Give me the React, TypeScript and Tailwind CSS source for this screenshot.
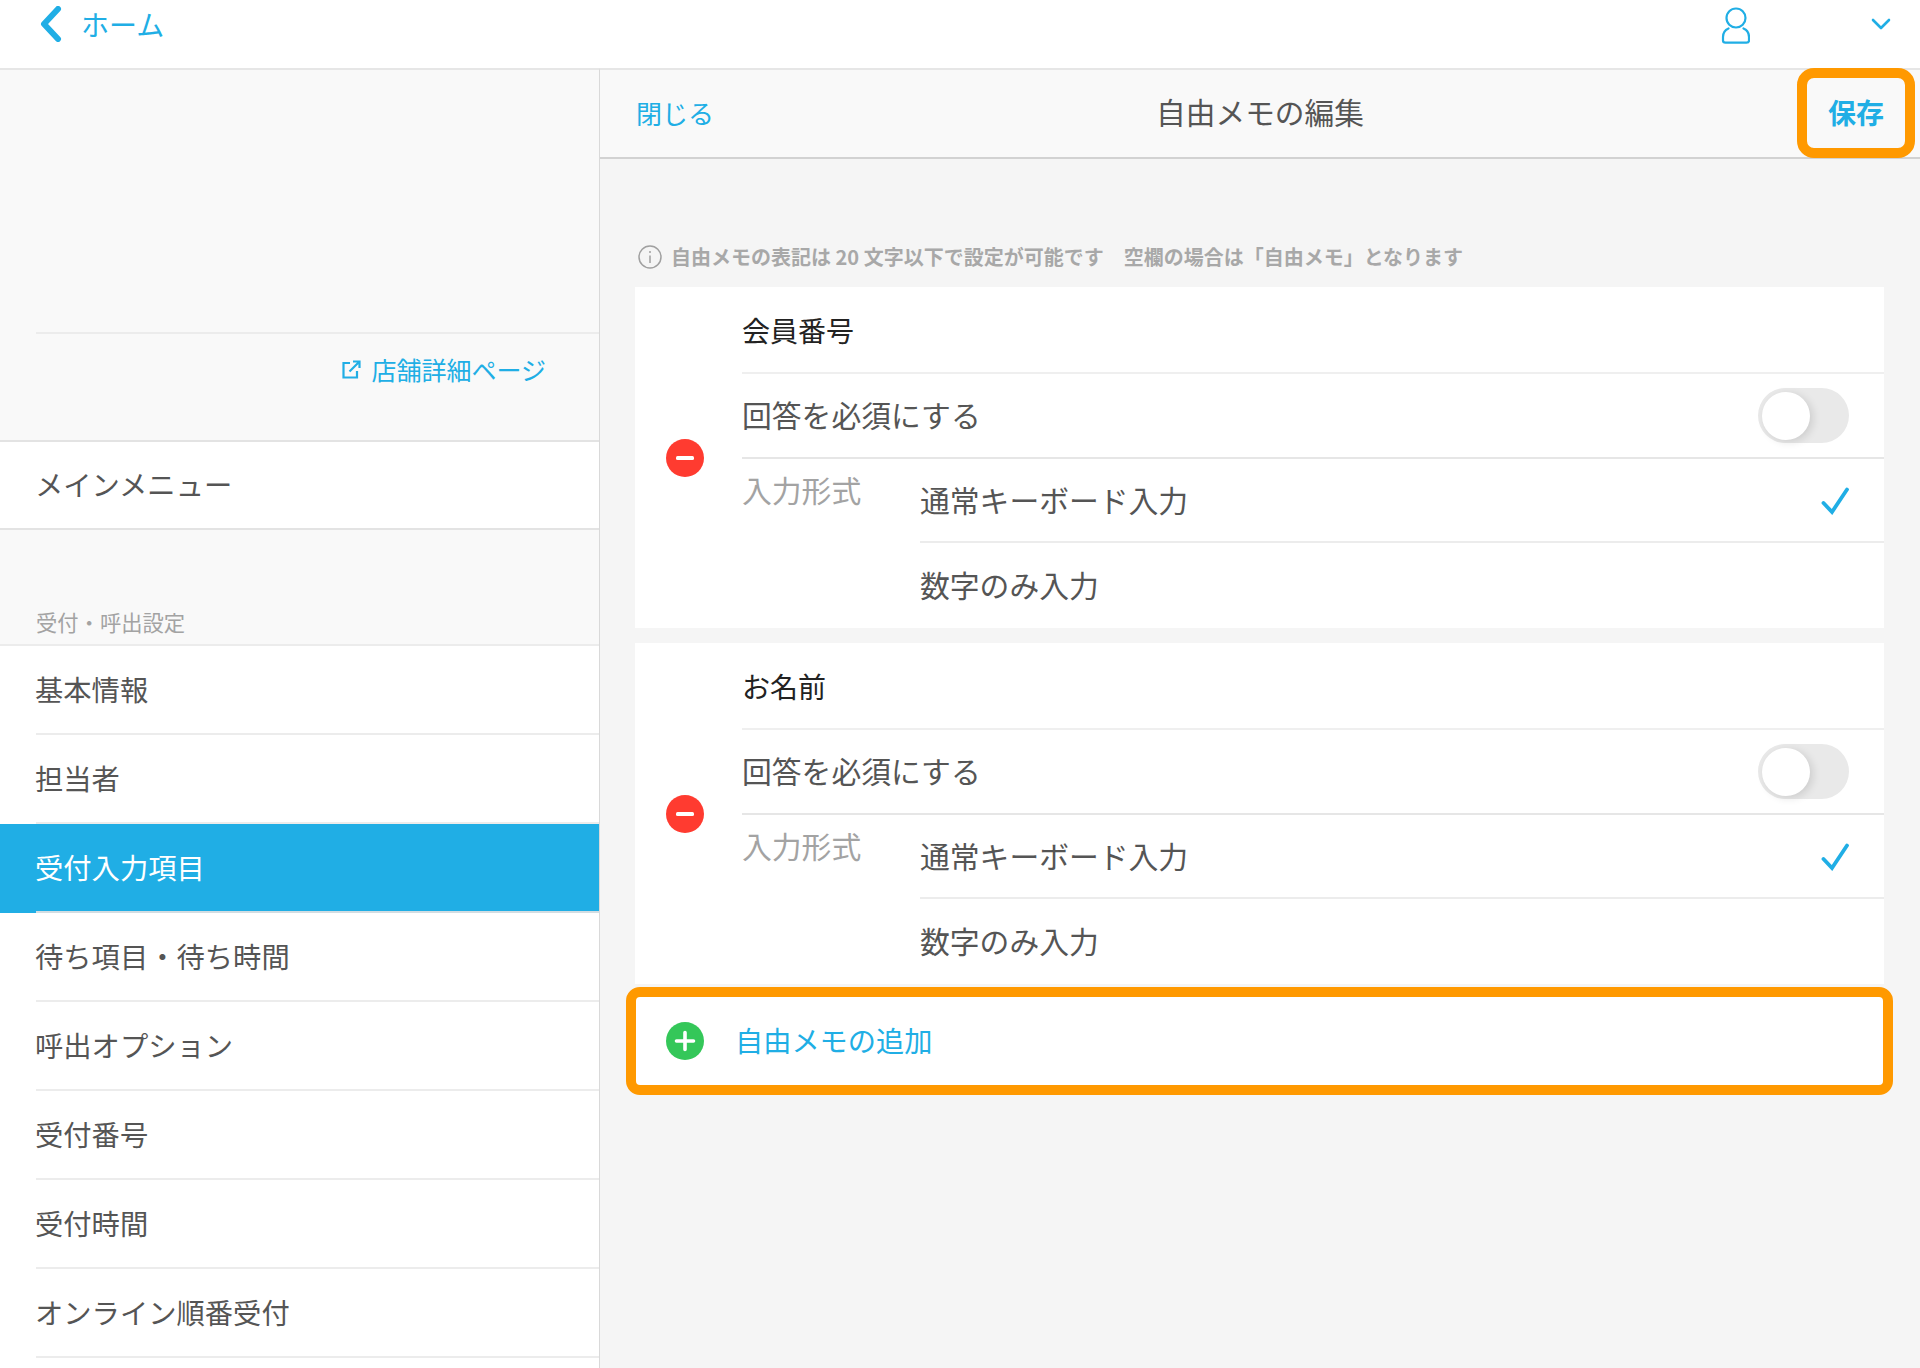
import React from "react";

function MinusIcon() {
  return (
    <svg width="38" height="38" viewBox="0 0 38 38">
      <circle cx="19" cy="19" r="19" fill="#ff3b30" />
      <rect x="10" y="17" width="18" height="4" rx="1.5" fill="#fff" />
    </svg>
  );
}

function Toggle() {
  return (
    <div className="flex h-[55px] w-[91px] items-center rounded-full bg-[#e9e9e9] pl-[4px]">
      <div className="h-[48px] w-[48px] rounded-full bg-white shadow-[3px_2px_8px_rgba(0,0,0,0.12)]" />
    </div>
  );
}

function Check() {
  return (
    <svg className="mt-[2px]" width="28" height="28" viewBox="0 0 28 28" fill="none">
      <path d="M2.5 16 L11 25 L26 2.5" stroke="#20aee5" strokeWidth="3.8" strokeLinecap="round" strokeLinejoin="miter" />
    </svg>
  );
}

function MemoCard({ title }: { title: string }) {
  return (
    <div className="flex h-[341px] items-center bg-white">
      <div className="flex w-[107px] shrink-0 pl-[31px]">
        <MinusIcon />
      </div>
      <div className="flex h-full flex-1 flex-col">
        <div className="flex h-[87px] items-center border-b-2 border-[#efefef] text-[28px] text-[#222]">{title}</div>
        <div className="flex h-[85px] items-center justify-between border-b-2 border-[#e6e6e6] pr-[35px] text-[29.8px] text-[#555]">
          <span className="mb-[3px]">回答を必須にする</span>
          <Toggle />
        </div>
        <div className="flex flex-1">
          <div className="w-[178px] shrink-0 pt-[5px] text-[29.8px] leading-[50px] text-[#a3a3a3]">入力形式</div>
          <div className="flex flex-1 flex-col text-[29.8px] text-[#555]">
            <div className="flex h-[84px] items-center justify-between border-b-2 border-[#ececec] pr-[35px]">
              <span className="mb-[2px]">通常キーボード入力</span>
              <Check />
            </div>
            <div className="flex flex-1 items-center pb-[2px]">数字のみ入力</div>
          </div>
        </div>
      </div>
    </div>
  );
}

function NavRow({ label, active }: { label: string; active?: boolean }) {
  return (
    <div className={active ? "h-[89px] shrink-0 bg-[#20aee5] pl-[36px]" : "h-[89px] shrink-0 bg-white pl-[36px]"}>
      <div
        className={
          active
            ? "flex h-full items-center border-b-2 border-[#d3dde2] text-[28.3px] text-white"
            : "flex h-full items-center border-b-2 border-[#ececec] text-[28.3px] text-[#555]"
        }
      >
        <span className="-ml-px">{label}</span>
      </div>
    </div>
  );
}

export default function App() {
  const nav = ["基本情報", "担当者", "受付入力項目", "待ち項目・待ち時間", "呼出オプション", "受付番号", "受付時間", "オンライン順番受付", ""];
  return (
    <div className="flex h-[1368px] w-[1920px] flex-col overflow-hidden bg-white font-['Noto_Sans_CJK_JP','Noto_Sans',sans-serif]">
      <header className="flex h-[68px] shrink-0 items-start bg-white">
        <div className="flex items-center pl-[39px] pt-[6px]">
          <svg width="24" height="36" viewBox="0 0 24 36" fill="none">
            <path d="M19 3 L5 18 L19 33" stroke="#20aee5" strokeWidth="6" strokeLinecap="round" strokeLinejoin="round" />
          </svg>
          <span className="ml-[18px] text-[28px] leading-[34px] text-[#20aee5]">ホーム</span>
        </div>
        <div className="ml-auto flex items-start pt-[7px]">
          <svg width="29" height="37" viewBox="0 0 29 37" fill="none" stroke="#20aee5" strokeWidth="2.2">
            <circle cx="15" cy="11" r="9.5" />
            <path d="M7.5 21.5 C4 23 2 26 2 30 V33.5 C2 35 3 35.6 4.5 35.6 H25.5 C27 35.6 28 35 28 33.5 V30 C28 26 26 23 22.5 21.5" strokeLinecap="round" />
          </svg>
          <svg className="ml-[121px] mr-[29px] mt-[11px]" width="20" height="12" viewBox="0 0 20 12" fill="none">
            <path d="M2 2 L10 10 L18 2" stroke="#20aee5" strokeWidth="2.6" strokeLinecap="round" strokeLinejoin="round" />
          </svg>
        </div>
      </header>
      <div className="flex flex-1 overflow-hidden">
        <aside className="flex w-[600px] shrink-0 flex-col border-r border-t-2 border-r-[#d9d9d9] border-t-[#e6e6e6] bg-[#f9f9f9]">
          <div className="ml-[36px] h-[264px] shrink-0 border-b-2 border-[#ececec]" />
          <div className="flex h-[106px] shrink-0 items-start justify-end pr-[53px] pt-[17px]">
            <div className="flex items-center text-[25px] leading-[36px] text-[#20aee5]">
              <svg className="ml-[1px] mr-[10px]" width="19" height="19" viewBox="0 0 19 19" fill="none" stroke="#20aee5" strokeWidth="2.2">
                <path d="M8 3 H1.5 V17.5 H15 V11" />
                <path d="M7.5 11.5 L17 2 M11 1.5 H17.5 V8" />
              </svg>
              <span>店舗詳細ページ</span>
            </div>
          </div>
          <div className="flex h-[90px] shrink-0 items-center border-y-2 border-[#e3e3e3] bg-white pb-[2px] pl-[35px] text-[28.3px] text-[#555]">メインメニュー</div>
          <div className="flex h-[116px] shrink-0 items-end border-b-2 border-[#ececec] pb-[7px] pl-[36px] text-[21.3px] leading-[30px] text-[#a3a3a3]">受付・呼出設定</div>
          {nav.map((n, i) => (
            <NavRow key={i} label={n} active={n === "受付入力項目"} />
          ))}
        </aside>
        <main className="flex flex-1 flex-col bg-[#f5f5f5]">
          <div className="relative grid h-[91px] shrink-0 grid-cols-[1fr_auto_1fr] items-center border-y-2 border-b-[#d2d2d2] border-t-[#e6e6e6] bg-[#f9f9f9] px-[36px]">
            <span className="mb-[2px] text-[26px] text-[#20aee5]">閉じる</span>
            <span className="mb-[2px] text-[29.7px] text-[#555]">自由メモの編集</span>
            <div className="absolute right-[5px] top-[-2px] flex h-[90px] w-[118px] items-center justify-center rounded-[17px] border-[10px] border-[#ff9900] pb-[2px] text-[28px] font-bold text-[#20aee5]">保存</div>
          </div>
          <div className="flex flex-1 flex-col pl-[35px] pr-[36px]">
            <div className="mt-[86px] flex h-[24px] items-center pl-[3px] text-[20px] font-bold text-[#a8a8a8] whitespace-pre">
              <svg className="mr-[9px]" width="24" height="24" viewBox="0 0 24 24" fill="none" stroke="#a0a0a0" strokeWidth="1.5">
                <circle cx="12" cy="12" r="11" />
                <path d="M12 10.5 V18 M12 6 V8" />
              </svg>
              <span>自由メモの表記は 20 文字以下で設定が可能です　空欄の場合は「自由メモ」となります</span>
            </div>
            <div className="mt-[18px]">
              <MemoCard title="会員番号" />
            </div>
            <div className="mt-[15px]">
              <MemoCard title="お名前" />
            </div>
            <div className="-mx-[9px] mt-[3px] flex h-[108px] shrink-0 items-center rounded-[14px] border-[10px] border-[#ff9900] bg-white pl-[30px]">
              <svg width="38" height="38" viewBox="0 0 38 38">
                <circle cx="19" cy="19" r="19" fill="#34c759" />
                <path d="M19 10.5 V27.5 M10.5 19 H27.5" stroke="#fff" strokeWidth="3.6" strokeLinecap="round" />
              </svg>
              <span className="mb-[2px] ml-[31px] text-[28.2px] text-[#20aee5]">自由メモの追加</span>
            </div>
          </div>
        </main>
      </div>
    </div>
  );
}
